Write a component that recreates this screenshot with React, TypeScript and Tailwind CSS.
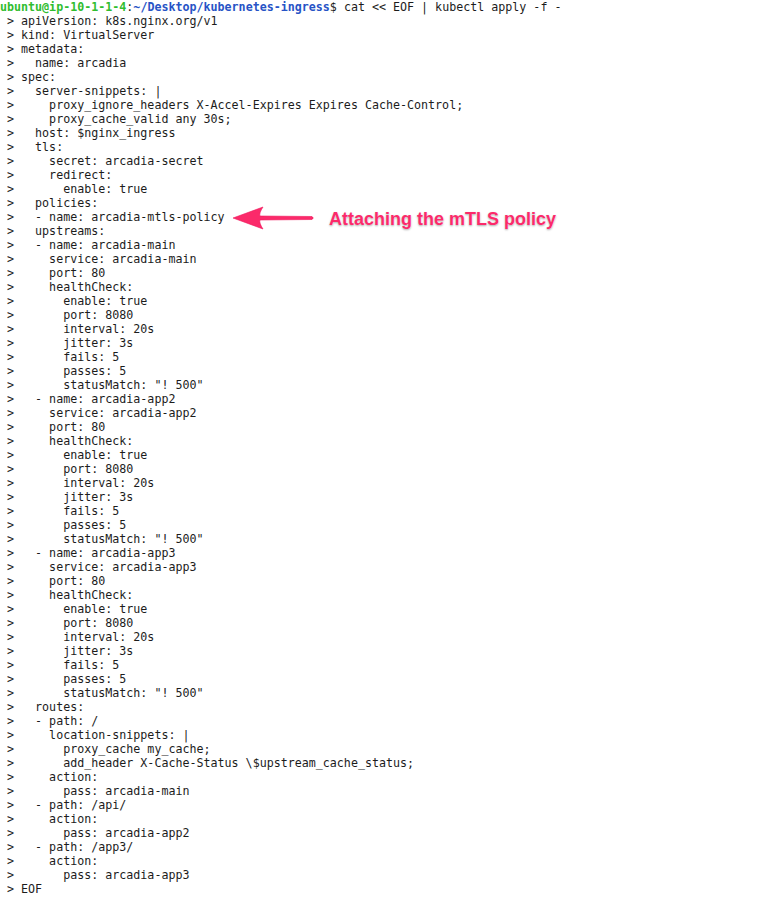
const lines: string[] = [
  " > apiVersion: k8s.nginx.org/v1",
  " > kind: VirtualServer",
  " > metadata:",
  " >   name: arcadia",
  " > spec:",
  " >   server-snippets: |",
  " >     proxy_ignore_headers X-Accel-Expires Expires Cache-Control;",
  " >     proxy_cache_valid any 30s;",
  " >   host: $nginx_ingress",
  " >   tls:",
  " >     secret: arcadia-secret",
  " >     redirect:",
  " >       enable: true",
  " >   policies:",
  " >   - name: arcadia-mtls-policy",
  " >   upstreams:",
  " >   - name: arcadia-main",
  " >     service: arcadia-main",
  " >     port: 80",
  " >     healthCheck:",
  " >       enable: true",
  " >       port: 8080",
  " >       interval: 20s",
  " >       jitter: 3s",
  " >       fails: 5",
  " >       passes: 5",
  ' >       statusMatch: "! 500"',
  " >   - name: arcadia-app2",
  " >     service: arcadia-app2",
  " >     port: 80",
  " >     healthCheck:",
  " >       enable: true",
  " >       port: 8080",
  " >       interval: 20s",
  " >       jitter: 3s",
  " >       fails: 5",
  " >       passes: 5",
  ' >       statusMatch: "! 500"',
  " >   - name: arcadia-app3",
  " >     service: arcadia-app3",
  " >     port: 80",
  " >     healthCheck:",
  " >       enable: true",
  " >       port: 8080",
  " >       interval: 20s",
  " >       jitter: 3s",
  " >       fails: 5",
  " >       passes: 5",
  ' >       statusMatch: "! 500"',
  " >   routes:",
  " >   - path: /",
  " >     location-snippets: |",
  " >       proxy_cache my_cache;",
  " >       add_header X-Cache-Status \\$upstream_cache_status;",
  " >     action:",
  " >       pass: arcadia-main",
  " >   - path: /api/",
  " >     action:",
  " >       pass: arcadia-app2",
  " >   - path: /app3/",
  " >     action:",
  " >       pass: arcadia-app3",
  " > EOF",
  "virtualserver.k8s.nginx.org/arcadia configured",
];

const ArrowNote = () => (
  <>
    <svg
      className="absolute left-[232px] top-[204px]"
      width="84"
      height="28"
      viewBox="0 0 84 28"
    >
      <path
        d="M1 14 L31 3 Q27 9 28 12 L80 12.5 Q82.5 14 80 15.5 L28 16 Q27 19 31 25 Z"
        fill="#fb2a6a"
        stroke="#f0175c"
        strokeWidth="0.6"
        strokeLinejoin="round"
      />
    </svg>
    <div className="absolute left-[329px] top-[210px] whitespace-nowrap font-['Liberation_Sans',Arial,sans-serif] text-[18px] leading-[18px] font-bold text-[#fb2a6a] [text-shadow:0_0_1px_#fff,0_1px_2px_rgba(0,0,0,0.35)]">
      Attaching the mTLS policy
    </div>
  </>
);

export default function App() {
  return (
    <div className="relative h-[898px] w-[762px] overflow-hidden bg-white font-['DejaVu_Sans_Mono',monospace] text-[11.66px] leading-[14px] text-[#1c1c1c]">
      <div className="whitespace-pre">
        <span className="font-bold text-[#2fbd2f]">ubuntu@ip-10-1-1-4</span>
        <span>:</span>
        <span className="font-bold text-[#2753c6]">~/Desktop/kubernetes-ingress</span>
        <span>$ cat &lt;&lt; EOF | kubectl apply -f -</span>
      </div>
      {lines.map((l, i) => (
        <div key={i} className="h-[14px] whitespace-pre">
          {l}
        </div>
      ))}
      <ArrowNote />
    </div>
  );
}
